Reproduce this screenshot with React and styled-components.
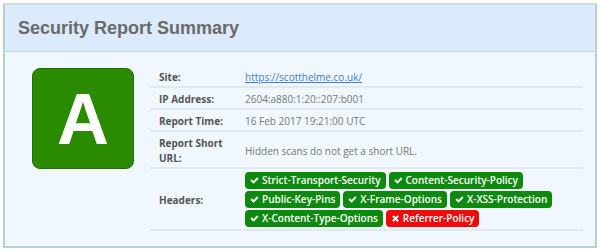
import React from "react";
import styled, { createGlobalStyle } from "styled-components";

const GlobalStyle = createGlobalStyle`
  html, body {
    margin: 0;
    padding: 0;
    background: #ffffff;
  }
  body {
    font-family: "Open Sans", "Noto Sans", sans-serif;
  }
`;

const Panel = styled.section`
  margin: 3px;
  width: 590px;
  border: 2px solid #b7ced3;
  border-top-color: #c9dde1;
  background: #f0f7fe;
`;

const PanelHeader = styled.header`
  background: #dcebfc;
  border-bottom: 1px solid #c6dbeb;
  height: 46px;
  display: flex;
  align-items: center;
  padding: 0 13px;
`;

const Title = styled.h3`
  margin: 0;
  font-family: "Liberation Sans", Arial, sans-serif;
  font-size: 18px;
  font-weight: bold;
  color: #6a6a6a;
`;

const PanelBody = styled.div`
  display: flex;
  align-items: flex-start;
  padding: 14px 12px 15px 27px;
`;

const GradeColumn = styled.div`
  width: 118px;
  flex: none;
  padding-top: 2px;
`;

const Grade = styled.div`
  width: 100px;
  height: 99px;
  border: 1px solid #236f00;
  border-radius: 8px;
  background: #2a8b00;
  color: #ffffff;
  display: flex;
  align-items: center;
  justify-content: center;
  font-family: "Liberation Sans", Arial, sans-serif;
  font-weight: bold;
  font-size: 72px;
  line-height: 1;
`;

const Table = styled.table`
  flex: 1;
  table-layout: fixed;
  border-collapse: collapse;
  font-size: 10px;
  line-height: 15px;
`;

const Row = styled.tr`
  border-bottom: 2px solid #e3e8ec;
`;

const Label = styled.th`
  box-sizing: border-box;
  width: 95px;
  padding: 4px 8px 1px 9px;
  text-align: left;
  vertical-align: middle;
  font-weight: 700;
  color: #555555;
`;

const Value = styled.td`
  padding: 4px 8px 1px 0;
  vertical-align: middle;
  color: #777777;
`;

const SiteLink = styled.a`
  color: #3a7ee0;
  text-decoration: underline;
`;

const Badges = styled.div`
  display: flex;
  flex-wrap: wrap;
  gap: 2px 3px;
  margin: -1px 0 1px;
`;

const Badge = styled.span`
  display: inline-flex;
  align-items: center;
  gap: 3px;
  height: 17px;
  padding: 0 5px 0 5px;
  border-radius: 4px;
  background: ${(p) => (p.$bad ? "#f00a0a" : "#0d8a0d")};
  color: #ffffff;
  font-size: 10px;
  font-weight: 600;
  white-space: nowrap;
`;

const Icon = styled.svg`
  width: 9px;
  height: 9px;
  flex: none;
`;

const Check = () => (
  <Icon viewBox="0 0 16 16">
    <path d="M0.8 8.4 L3.4 5.8 L6.3 8.7 L12.6 2.4 L15.2 5 L6.3 13.9 Z" fill="#fff" />
  </Icon>
);

const Cross = () => (
  <Icon viewBox="0 0 16 16">
    <path
      d="M2 4.6 L4.6 2 L8 5.4 L11.4 2 L14 4.6 L10.6 8 L14 11.4 L11.4 14 L8 10.6 L4.6 14 L2 11.4 L5.4 8 Z"
      fill="#fff"
    />
  </Icon>
);

const headers = [
  { name: "Strict-Transport-Security", ok: true },
  { name: "Content-Security-Policy", ok: true },
  { name: "Public-Key-Pins", ok: true },
  { name: "X-Frame-Options", ok: true },
  { name: "X-XSS-Protection", ok: true },
  { name: "X-Content-Type-Options", ok: true },
  { name: "Referrer-Policy", ok: false },
];

const App = () => {
  return (
    <>
      <GlobalStyle />
      <Panel>
        <PanelHeader>
          <Title>Security Report Summary</Title>
        </PanelHeader>
        <PanelBody>
          <GradeColumn>
            <Grade>A</Grade>
          </GradeColumn>
          <Table>
            <tbody>
              <Row>
                <Label>Site:</Label>
                <Value>
                  <SiteLink href="#">https://scotthelme.co.uk/</SiteLink>
                </Value>
              </Row>
              <Row>
                <Label>IP Address:</Label>
                <Value>2604:a880:1:20::207:b001</Value>
              </Row>
              <Row>
                <Label>Report Time:</Label>
                <Value>16 Feb 2017 19:21:00 UTC</Value>
              </Row>
              <Row>
                <Label>Report Short URL:</Label>
                <Value>Hidden scans do not get a short URL.</Value>
              </Row>
              <Row>
                <Label>Headers:</Label>
                <Value>
                  <Badges>
                    {headers.map((h) => (
                      <Badge key={h.name} $bad={!h.ok}>
                        {h.ok ? <Check /> : <Cross />}
                        {h.name}
                      </Badge>
                    ))}
                  </Badges>
                </Value>
              </Row>
            </tbody>
          </Table>
        </PanelBody>
      </Panel>
    </>
  );
};

export default App;
